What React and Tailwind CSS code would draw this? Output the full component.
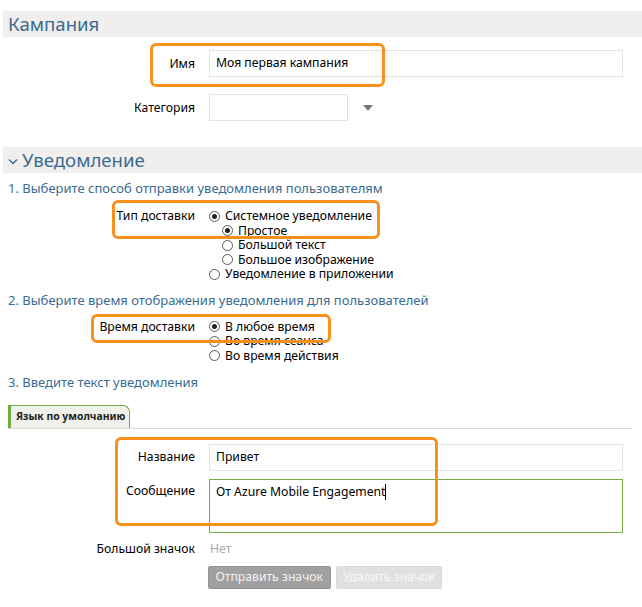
import React from "react";

const FONT = { fontFamily: '"Noto Sans", "Open Sans", sans-serif' };

function Radio({ checked }) {
  return (
    <span className="inline-flex items-center justify-center w-[11px] h-[11px] rounded-full border border-[#5a5a5a] bg-white shrink-0">
      {checked && <span className="w-[5px] h-[5px] rounded-full bg-[#222]"></span>}
    </span>
  );
}

function RadioLine({ checked, indent, children }) {
  return (
    <div className={"flex items-center gap-[5px] h-[14.5px] " + (indent ? "pl-[13px]" : "")}>
      <Radio checked={checked} />
      <span className="text-[12.2px] leading-[14.5px] text-black">{children}</span>
    </div>
  );
}

function SectionHeader({ children, chevron }) {
  return (
    <div className="ml-[3px] h-[26px] bg-[#f0efed] flex items-center pl-[5px]">
      {chevron && (
        <svg width="10" height="7" viewBox="0 0 10 7" className="mr-[4px] mt-[3px]">
          <path d="M1 1.5 L5 5.5 L9 1.5" fill="none" stroke="#3a6b90" strokeWidth="1.4" />
        </svg>
      )}
      <span className="text-[18.6px] leading-none text-[#3a6b90]">{children}</span>
    </div>
  );
}

function Step({ children, className }) {
  return (
    <div className={"pl-[8px] text-[13px] leading-[16px] text-[#3a6b90] " + className}>
      {children}
    </div>
  );
}

function Highlight({ className }) {
  return (
    <div className={"absolute border-[3px] border-[#f7901e] rounded-[6px] pointer-events-none " + className}></div>
  );
}

export default function App() {
  return (
    <div className="relative w-[642px] h-[607px] bg-white overflow-hidden text-black" style={FONT}>
      <div className="pt-[11px]">
        <SectionHeader>Кампания</SectionHeader>

        <div className="flex items-center mt-[13px]">
          <div className="w-[195px] text-right text-[12.2px] leading-[16px]">Имя</div>
          <div className="ml-[14px] w-[414px] h-[27px] border border-[#e3e3e3] flex items-center px-[6px] text-[12.2px]">
            Моя первая кампания
          </div>
        </div>

        <div className="flex items-center mt-[17px]">
          <div className="w-[195px] text-right text-[12.2px] leading-[16px]">Категория</div>
          <div className="ml-[14px] w-[139px] h-[27px] border border-[#e3e3e3]"></div>
          <svg width="10" height="6" viewBox="0 0 10 6" className="ml-[15px]">
            <path d="M0 0 H10 L5 6 Z" fill="#777" />
          </svg>
        </div>

        <div className="mt-[26px]">
          <SectionHeader chevron>Уведомление</SectionHeader>
        </div>

        <Step className="mt-[7px]">1. Выберите способ отправки уведомления пользователям</Step>

        <div className="flex mt-[13px]">
          <div className="w-[195px] text-right text-[12.2px] leading-[14.5px]">Тип доставки</div>
          <div className="ml-[14px]">
            <RadioLine checked>Системное уведомление</RadioLine>
            <RadioLine checked indent>Простое</RadioLine>
            <RadioLine indent>Большой текст</RadioLine>
            <RadioLine indent>Большое изображение</RadioLine>
            <RadioLine>Уведомление в приложении</RadioLine>
          </div>
        </div>

        <Step className="mt-[10px]">2. Выберите время отображения уведомления для пользователей</Step>

        <div className="flex mt-[12px]">
          <div className="w-[195px] text-right text-[12.2px] leading-[14.5px]">Время доставки</div>
          <div className="ml-[14px]">
            <RadioLine checked>В любое время</RadioLine>
            <RadioLine>Во время сеанса</RadioLine>
            <RadioLine>Во время действия</RadioLine>
          </div>
        </div>

        <Step className="mt-[11px]">3. Введите текст уведомления</Step>

        <div className="mt-[15px] ml-[8px] w-[625px] border-b border-[#dcdcdc] flex">
          <div className="h-[23px] pl-[5px] pr-[4px] flex items-center bg-[#f1f1ec] border-l-[3px] border-t border-r border-[#72ab3f] rounded-tr-[7px] text-[10.4px] font-bold text-[#222]">
            Язык по умолчанию
          </div>
        </div>

        <div className="flex items-start mt-[15px]">
          <div className="w-[195px] text-right text-[12.2px] leading-[16px] pt-[5px]">Название</div>
          <div className="ml-[14px] w-[414px] h-[27px] border border-[#e3e3e3] flex items-center px-[6px] text-[12.2px]">
            Привет
          </div>
        </div>

        <div className="flex items-start mt-[8px]">
          <div className="w-[195px] text-right text-[12.2px] leading-[16px] pt-[4px]">Сообщение</div>
          <div className="ml-[14px] w-[414px] h-[54px] border border-[#74ab45] px-[6px] pt-[4px] text-[12.2px] leading-[16px] flex items-start">
            <span>От Azure Mobile Engagement</span>
            <span className="inline-block w-px h-[16px] bg-black"></span>
          </div>
        </div>

        <div className="flex items-center mt-[8px]">
          <div className="w-[195px] text-right text-[12.2px] leading-[16px]">Большой значок</div>
          <div className="ml-[15px] text-[12.2px] leading-[16px] text-[#aaa]">Нет</div>
        </div>

        <div className="flex ml-[208px] mt-[9px] gap-[5px]">
          <button className="h-[23px] px-[6.5px] rounded-[2px] bg-[#a0a0a0] border border-[#939393] text-[12.2px] text-[#f2f2f2]">
            Отправить значок
          </button>
          <button className="h-[23px] px-[6.5px] rounded-[2px] bg-[#e0e0e0] border border-[#dadada] text-[12.2px] text-[#f8f8f8]">
            Удалить значок
          </button>
        </div>
      </div>

      <Highlight className="left-[150px] top-[43px] w-[235px] h-[44px]" />
      <Highlight className="left-[112px] top-[200px] w-[268px] h-[39px]" />
      <Highlight className="left-[91px] top-[314px] w-[240px] h-[29px]" />
      <Highlight className="left-[115px] top-[437px] w-[323px] h-[89px]" />
    </div>
  );
}
